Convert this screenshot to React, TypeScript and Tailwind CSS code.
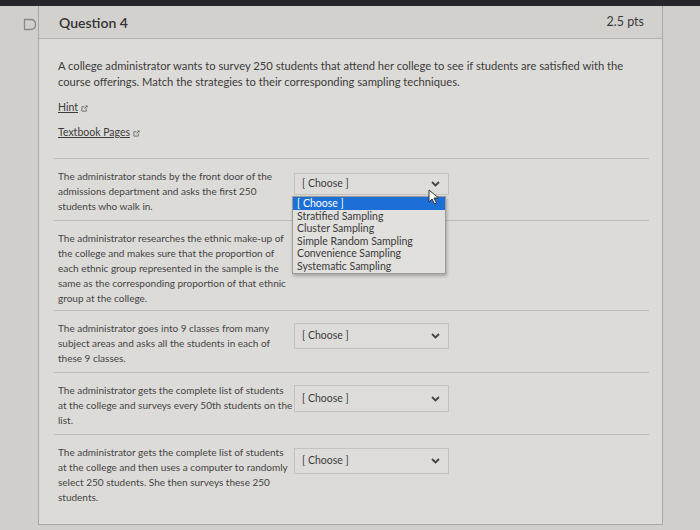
import React from "react";

const font = { fontFamily: "Lato, 'Open Sans', sans-serif" };

function Chevron() {
  return (
    <svg width="9" height="6" viewBox="0 0 9 6" className="shrink-0">
      <path d="M1 1 L4.5 4.5 L8 1" fill="none" stroke="#444" strokeWidth="1.8" />
    </svg>
  );
}

function ExtLink() {
  return (
    <svg width="7" height="7" viewBox="0 0 8 8" className="ml-[3px] inline-block align-middle">
      <path d="M1 2 H4 M1 2 V7 H6 V4" fill="none" stroke="#666" strokeWidth="1" />
      <path d="M4 4 L7 1 M5 1 H7 V3" fill="none" stroke="#666" strokeWidth="1" />
    </svg>
  );
}

function Select({ mt = "mt-[13px]", h = "h-[25px]" }: { mt?: string; h?: string }) {
  return (
    <div
      className={`${mt} ${h} w-[155px] shrink-0 flex items-center justify-between pl-[7px] pr-[8px] border border-[#c4c2bf] bg-[#dedcd9] text-[10.5px] text-[#3c3c3c]`}
    >
      <span>[ Choose ]</span>
      <Chevron />
    </div>
  );
}

function Row({
  lines,
  children,
  pb = "pb-[6px]",
}: {
  lines: string[];
  children?: React.ReactNode;
  pb?: string;
}) {
  return (
    <div className={`flex border-t border-[#bdbbb8] pt-[10px] ${pb} pl-[4px]`}>
      <div className="w-[236px] shrink-0 text-[10px] leading-[15px] text-[#444]">
        {lines.map((l, i) => (
          <div key={i} className="whitespace-nowrap">
            {l}
          </div>
        ))}
      </div>
      {children}
    </div>
  );
}

export default function App() {
  return (
    <div className="w-[700px] h-[530px] overflow-hidden bg-[#d1cfcc] flex flex-col" style={font}>
      <div className="h-[6px] bg-[#27262b] shrink-0" />
      <div className="flex flex-1">
        <div className="w-[38px] shrink-0 pt-[12px] pl-[23px]">
          <svg width="14" height="13" viewBox="0 0 14 13">
            <path d="M1.5 1.5 H7.5 Q12.5 1.5 12.5 6.5 Q12.5 11.5 7.5 11.5 H1.5 Z" fill="none" stroke="#8a8986" strokeWidth="1.3" />
          </svg>
        </div>
        <div className="w-[625px] h-[519px] shrink-0 flex flex-col border-l border-r border-b border-[#a9a7a4] bg-[#dddbd8]">
          <div className="h-[33px] shrink-0 flex items-center justify-between pl-[20px] pr-[18px] bg-[#d3d1ce] border-b border-[#b3b1ae]">
            <span className="text-[14px] font-semibold text-[#333]">Question 4</span>
            <span className="text-[12.5px] text-[#3a3a3a]">2.5 pts</span>
          </div>
          <div className="pl-[19px] pr-[20px] pt-[19px] text-[#3b3b3b] relative flex-1">
            <p className="text-[11.2px] leading-[16px] w-[590px]">
              A college administrator wants to survey 250 students that attend her college to see if students are satisfied with the course offerings. Match the strategies to their corresponding sampling techniques.
            </p>
            <div className="mt-[9px] text-[10.5px] leading-[16px]">
              <span className="underline">Hint</span>
              <ExtLink />
            </div>
            <div className="mt-[9px] text-[10.5px] leading-[16px]">
              <span className="underline">Textbook Pages</span>
              <ExtLink />
            </div>
            <div className="mt-[18px] ml-[-4px] w-[595px]">
              <Row
                lines={[
                  "The administrator stands by the front door of the",
                  "admissions department and asks the first 250",
                  "students who walk in.",
                ]}
              >
                <Select mt="mt-[4px]" h="h-[22px]" />
              </Row>
              <Row
                lines={[
                  "The administrator researches the ethnic make-up of",
                  "the college and makes sure that the proportion of",
                  "each ethnic group represented in the sample is the",
                  "same as the corresponding proportion of that ethnic",
                  "group at the college.",
                ]}
                pb="pb-[4px]"
              />
              <Row
                lines={[
                  "The administrator goes into 9 classes from many",
                  "subject areas and asks all the students in each of",
                  "these 9 classes.",
                ]}
              >
                <Select mt="mt-[2px]" h="h-[26px]" />
              </Row>
              <Row
                lines={[
                  "The administrator gets the complete list of students",
                  "at the college and surveys every 50th students on the",
                  "list.",
                ]}
              >
                <Select mt="mt-[2px]" h="h-[27px]" />
              </Row>
              <Row
                lines={[
                  "The administrator gets the complete list of students",
                  "at the college and then uses a computer to randomly",
                  "select 250 students. She then surveys these 250",
                  "students.",
                ]}
              >
                <Select mt="mt-[3px]" h="h-[26px]" />
              </Row>
            </div>
            <div className="absolute left-[253px] top-[157px] w-[154px] bg-[#e2e0dd] border border-[#9d9b98] shadow-[1px_2px_3px_rgba(0,0,0,0.25)] text-[10.5px] leading-[12.6px] text-[#3a3a3a]">
              <div className="bg-[#1c6fd6] text-white pl-[4px]">[ Choose ]</div>
              <div className="pl-[4px]">Stratified Sampling</div>
              <div className="pl-[4px]">Cluster Sampling</div>
              <div className="pl-[4px]">Simple Random Sampling</div>
              <div className="pl-[4px]">Convenience Sampling</div>
              <div className="pl-[4px]">Systematic Sampling</div>
            </div>
            <svg className="absolute left-[389px] top-[150px]" width="13" height="16" viewBox="0 0 13 16">
              <path d="M1 1 L1 13 L4 10 L6.5 15 L8.5 14 L6 9 L10.5 9 Z" fill="#fff" stroke="#333" strokeWidth="1" />
            </svg>
          </div>
        </div>
      </div>
    </div>
  );
}
